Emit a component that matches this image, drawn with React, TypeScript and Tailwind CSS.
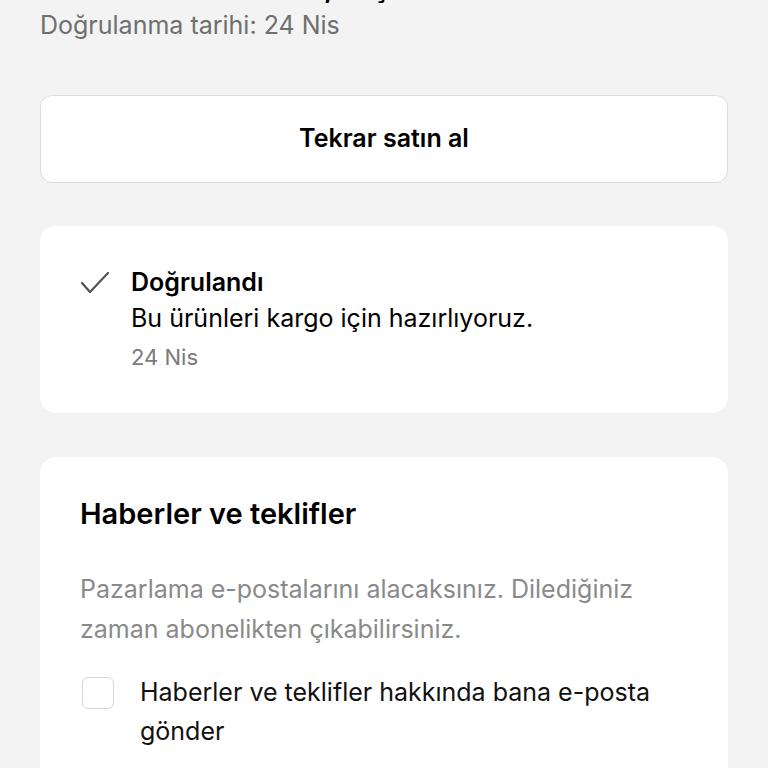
import React from "react";

export default function App() {
  return (
    <div
      className="w-[768px] h-[768px] overflow-hidden bg-[#f3f3f3] text-black"
      style={{ fontFamily: "Inter, 'Noto Sans', sans-serif" }}
    >
      <div className="px-10">
        <div className="mt-[-33px] h-[36px] overflow-hidden whitespace-nowrap text-[32px] font-semibold leading-[38px]">
          Merhaba Abdullah, teşekkürler!
        </div>
        <div className="mt-[7px] text-[25px] leading-[30px] text-[#6f6f6f]">
          Doğrulanma tarihi: 24 Nis
        </div>
        <button className="mt-[55px] flex h-[88px] w-full items-center justify-center rounded-[12px] border border-[#dcdcdc] bg-white text-[25px] font-semibold">
          Tekrar satın al
        </button>
        <div className="mt-[43px] flex gap-[21px] rounded-[16px] bg-white px-10 pt-[39px] pb-[41px]">
          <svg width="30" height="24" viewBox="0 0 30 24" className="mt-[6px] shrink-0">
            <path d="M2 12 L10 21 L28 2" fill="none" stroke="#555" strokeWidth="2.2" strokeLinecap="round" strokeLinejoin="round" />
          </svg>
          <div className="flex flex-col">
            <div className="text-[25px] font-semibold leading-[34px]">Doğrulandı</div>
            <div className="text-[25px] leading-[38px]">Bu ürünleri kargo için hazırlıyoruz.</div>
            <div className="mt-[5px] text-[22px] leading-[30px] text-[#7a7a7a]">24 Nis</div>
          </div>
        </div>
        <div className="mt-[44px] rounded-[16px] bg-white px-10 pt-[39px] pb-10">
          <div className="text-[29px] font-semibold leading-[36px]">Haberler ve teklifler</div>
          <div className="mt-[37px] text-[25px] leading-[40px] text-[#8a8a8a]">
            Pazarlama e-postalarını alacaksınız. Dilediğiniz zaman abonelikten çıkabilirsiniz.
          </div>
          <div className="mt-[24px] flex gap-[26px]">
            <div className="ml-[2px] mt-[4px] h-[32px] w-[32px] shrink-0 rounded-[6px] border border-[#d6d6d6] bg-white" />
            <div className="text-[25px] leading-[39px] text-[#111]">
              Haberler ve teklifler hakkında bana e-posta gönder
            </div>
          </div>
        </div>
      </div>
    </div>
  );
}
